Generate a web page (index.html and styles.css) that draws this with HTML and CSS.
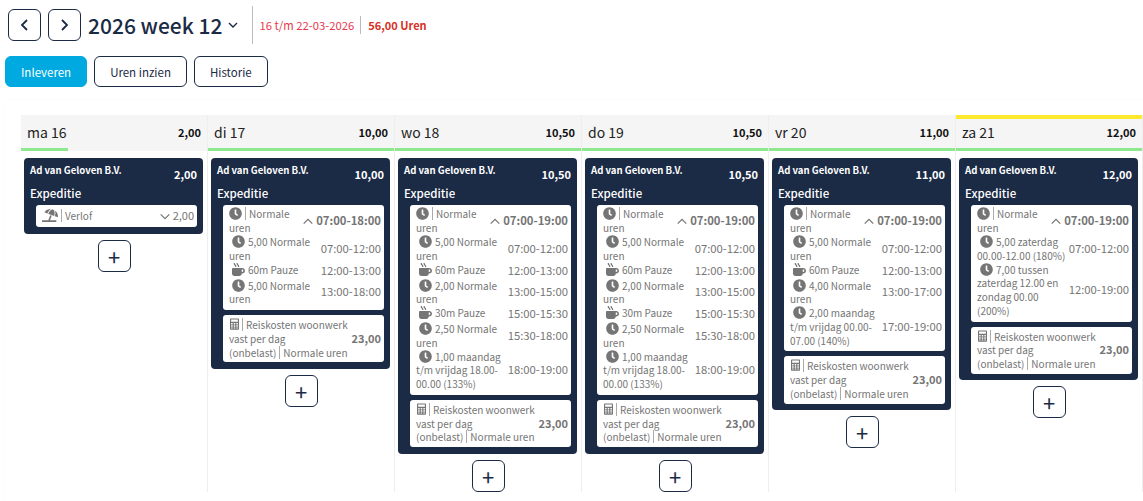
FILE: index.html
```html
<!DOCTYPE html>
<html lang="nl">
<head>
  <meta charset="UTF-8">
  <title>Uren</title>
  <link rel="stylesheet" href="styles.css">
</head>
<body>
  <svg class="defs" width="0" height="0">
    <symbol id="clock" viewBox="0 0 512 512"><path d="M256,8C119,8,8,119,8,256S119,504,256,504,504,393,504,256,393,8,256,8Zm92.49,313h0l-20,25a16,16,0,0,1-22.49,2.5h0l-67-49.72a40,40,0,0,1-15-31.23V112a16,16,0,0,1,16-16h32a16,16,0,0,1,16,16V256l58,42.5A16,16,0,0,1,348.49,321Z"/></symbol>
    <symbol id="mug" viewBox="0 0 512 512"><path d="M127.1 146.5c1.3 7.7 8 13.5 16 13.5h16.5c9.8 0 17.6-8.5 16.3-18-3.8-28.2-16.4-54.2-36.6-74.7-14.4-14.7-23.6-33.3-26.4-53.5C111.8 5.9 105 0 96.8 0H80.4C70.6 0 63 8.5 64.1 18c3.9 31.9 18 61.3 40.6 84.4 12 12.2 19.7 27.5 22.4 44.1zm112 0c1.3 7.7 8 13.5 16 13.5h16.5c9.8 0 17.6-8.5 16.3-18-3.8-28.2-16.4-54.2-36.6-74.7-14.4-14.7-23.6-33.3-26.4-53.5C223.8 5.9 217 0 208.8 0h-16.4c-9.8 0-17.5 8.5-16.3 18 3.9 31.9 18 61.3 40.6 84.4 12 12.2 19.7 27.5 22.4 44.1zM400 192H32c-17.7 0-32 14.3-32 32v192c0 53 43 96 96 96h192c53 0 96-43 96-96h16c61.8 0 112-50.2 112-112s-50.2-112-112-112zm0 160h-16v-96h16c26.5 0 48 21.5 48 48s-21.5 48-48 48z"/></symbol>
    <symbol id="calc" viewBox="0 0 12 15"><path fill-rule="evenodd" d="M1 0h10a1 1 0 0 1 1 1v13a1 1 0 0 1-1 1H1a1 1 0 0 1-1-1V1a1 1 0 0 1 1-1zm.5 1.5v3h9v-3zm0 4.500v2h2V6zm3.500 0v2h2V6zm3.500 0v2h2V6zM1.500 9v2h2V9zM5 9v2h2V9zm3.500 0v2h2V9zm-7 3v1.500h2V12zM5 12v1.500h2V12zm3.500 0v1.500h2V12z"/></symbol>
    <symbol id="beach" viewBox="0 0 640 512"><path d="M115.38 136.9l102.11 37.18c35.19-81.54 86.21-144.29 139-173.7-95.88-4.89-188.78 36.96-248.53 111.8-6.69 8.4-2.66 21.05 7.42 24.72zm132.25 48.16l238.48 86.83c35.76-121.38 18.7-231.66-42.63-253.98-7.4-2.7-15.13-4-23.09-4-58.02.01-128.27 69.17-172.76 171.15zM521.48 60.5c6.22 16.3 10.83 34.6 13.2 55.19 5.74 49.89-1.42 108.23-18.95 166.98l102.62 37.36c10.09 3.67 21.31-3.43 21.57-14.17 2.32-95.69-41.91-187.44-118.44-245.36zM560 447.98H321.06L386 269.5l-60.14-21.9-72.9 200.37H16c-8.84 0-16 7.16-16 16.01v32.01C0 504.83 7.16 512 16 512h544c8.84 0 16-7.17 16-16.01v-32.01c0-8.84-7.16-16-16-16z"/></symbol>
    <symbol id="up" viewBox="0 0 14 8"><path d="M1 7l6-6 6 6" fill="none" stroke="currentColor" stroke-width="1.700"/></symbol>
    <symbol id="down" viewBox="0 0 14 8"><path d="M1 1l6 6 6-6" fill="none" stroke="currentColor" stroke-width="1.700"/></symbol>
  </svg>

  <header class="topbar">
    <button class="nav-btn"><svg width="9" height="12" viewBox="0 0 9 12"><path d="M7 1L2 6l5 5" fill="none" stroke="currentColor" stroke-width="1.800"/></svg></button>
    <button class="nav-btn"><svg width="9" height="12" viewBox="0 0 9 12"><path d="M2 1l5 5-5 5" fill="none" stroke="currentColor" stroke-width="1.800"/></svg></button>
    <h1 class="week-title">2026 week 12</h1>
    <svg class="week-caret" width="10" height="6" viewBox="0 0 10 6"><path d="M1 1l4 4 4-4" fill="none" stroke="currentColor" stroke-width="1.400"/></svg>
    <div class="week-info">
      <span class="week-dates">16 t/m 22-03-2026</span>
      <span class="week-hours">56,00 Uren</span>
    </div>
  </header>

  <div class="actions">
    <button class="btn btn-primary">Inleveren</button>
    <button class="btn">Uren inzien</button>
    <button class="btn">Historie</button>
  </div>

  <main class="board">
    <!-- maandag -->
    <section class="day">
      <div class="day-head"><span class="day-name">ma 16</span><span class="day-total">2,00</span><div class="day-bar" style="width: 25%"></div></div>
      <div class="card">
        <div class="card-top"><span class="employer">Ad van Geloven B.V.</span><span class="card-total">2,00</span></div>
        <div class="dept">Expeditie</div>
        <div class="entry entry-flat">
          <span class="line-label"><svg class="ico ico-beach"><use href="#beach"/></svg><span class="bar"></span>Verlof</span>
          <span class="line-sum"><svg class="chev"><use href="#down"/></svg>2,00</span>
        </div>
      </div>
      <button class="add-btn">+</button>
    </section>

    <!-- dinsdag -->
    <section class="day">
      <div class="day-head"><span class="day-name">di 17</span><span class="day-total">10,00</span><div class="day-bar"></div></div>
      <div class="card">
        <div class="card-top"><span class="employer">Ad van Geloven B.V.</span><span class="card-total">10,00</span></div>
        <div class="dept">Expeditie</div>
        <div class="entry">
          <div class="row row-main"><span class="line-label"><svg class="ico"><use href="#clock"/></svg><span class="bar"></span>Normale uren</span><span class="time-main"><svg class="chev"><use href="#up"/></svg>07:00-18:00</span></div>
          <div class="row"><span class="line-label"><svg class="ico ico-sub"><use href="#clock"/></svg>5,00 Normale uren</span><span class="time">07:00-12:00</span></div>
          <div class="row row-pause"><span class="line-label"><svg class="ico ico-sub"><use href="#mug"/></svg>60m Pauze</span><span class="time">12:00-13:00</span></div>
          <div class="row"><span class="line-label"><svg class="ico ico-sub"><use href="#clock"/></svg>5,00 Normale uren</span><span class="time">13:00-18:00</span></div>
        </div>
        <div class="entry entry-cost">
          <span class="line-label"><svg class="ico ico-calc"><use href="#calc"/></svg><span class="bar"></span>Reiskosten woonwerk vast per dag <span class="nowrap">(onbelast)<span class="bar"></span>Normale uren</span></span>
          <span class="amount">23,00</span>
        </div>
      </div>
      <button class="add-btn">+</button>
    </section>

    <!-- woensdag -->
    <section class="day">
      <div class="day-head"><span class="day-name">wo 18</span><span class="day-total">10,50</span><div class="day-bar"></div></div>
      <div class="card">
        <div class="card-top"><span class="employer">Ad van Geloven B.V.</span><span class="card-total">10,50</span></div>
        <div class="dept">Expeditie</div>
        <div class="entry">
          <div class="row row-main"><span class="line-label"><svg class="ico"><use href="#clock"/></svg><span class="bar"></span>Normale uren</span><span class="time-main"><svg class="chev"><use href="#up"/></svg>07:00-19:00</span></div>
          <div class="row"><span class="line-label"><svg class="ico ico-sub"><use href="#clock"/></svg>5,00 Normale uren</span><span class="time">07:00-12:00</span></div>
          <div class="row row-pause"><span class="line-label"><svg class="ico ico-sub"><use href="#mug"/></svg>60m Pauze</span><span class="time">12:00-13:00</span></div>
          <div class="row"><span class="line-label"><svg class="ico ico-sub"><use href="#clock"/></svg>2,00 Normale uren</span><span class="time">13:00-15:00</span></div>
          <div class="row row-pause"><span class="line-label"><svg class="ico ico-sub"><use href="#mug"/></svg>30m Pauze</span><span class="time">15:00-15:30</span></div>
          <div class="row"><span class="line-label"><svg class="ico ico-sub"><use href="#clock"/></svg>2,50 Normale uren</span><span class="time">15:30-18:00</span></div>
          <div class="row"><span class="line-label"><svg class="ico ico-sub"><use href="#clock"/></svg>1,00 maandag t/m vrijdag 18.00-00.00 (133%)</span><span class="time">18:00-19:00</span></div>
        </div>
        <div class="entry entry-cost">
          <span class="line-label"><svg class="ico ico-calc"><use href="#calc"/></svg><span class="bar"></span>Reiskosten woonwerk vast per dag <span class="nowrap">(onbelast)<span class="bar"></span>Normale uren</span></span>
          <span class="amount">23,00</span>
        </div>
      </div>
      <button class="add-btn">+</button>
    </section>

    <!-- donderdag -->
    <section class="day">
      <div class="day-head"><span class="day-name">do 19</span><span class="day-total">10,50</span><div class="day-bar"></div></div>
      <div class="card">
        <div class="card-top"><span class="employer">Ad van Geloven B.V.</span><span class="card-total">10,50</span></div>
        <div class="dept">Expeditie</div>
        <div class="entry">
          <div class="row row-main"><span class="line-label"><svg class="ico"><use href="#clock"/></svg><span class="bar"></span>Normale uren</span><span class="time-main"><svg class="chev"><use href="#up"/></svg>07:00-19:00</span></div>
          <div class="row"><span class="line-label"><svg class="ico ico-sub"><use href="#clock"/></svg>5,00 Normale uren</span><span class="time">07:00-12:00</span></div>
          <div class="row row-pause"><span class="line-label"><svg class="ico ico-sub"><use href="#mug"/></svg>60m Pauze</span><span class="time">12:00-13:00</span></div>
          <div class="row"><span class="line-label"><svg class="ico ico-sub"><use href="#clock"/></svg>2,00 Normale uren</span><span class="time">13:00-15:00</span></div>
          <div class="row row-pause"><span class="line-label"><svg class="ico ico-sub"><use href="#mug"/></svg>30m Pauze</span><span class="time">15:00-15:30</span></div>
          <div class="row"><span class="line-label"><svg class="ico ico-sub"><use href="#clock"/></svg>2,50 Normale uren</span><span class="time">15:30-18:00</span></div>
          <div class="row"><span class="line-label"><svg class="ico ico-sub"><use href="#clock"/></svg>1,00 maandag t/m vrijdag 18.00-00.00 (133%)</span><span class="time">18:00-19:00</span></div>
        </div>
        <div class="entry entry-cost">
          <span class="line-label"><svg class="ico ico-calc"><use href="#calc"/></svg><span class="bar"></span>Reiskosten woonwerk vast per dag <span class="nowrap">(onbelast)<span class="bar"></span>Normale uren</span></span>
          <span class="amount">23,00</span>
        </div>
      </div>
      <button class="add-btn">+</button>
    </section>

    <!-- vrijdag -->
    <section class="day">
      <div class="day-head"><span class="day-name">vr 20</span><span class="day-total">11,00</span><div class="day-bar"></div></div>
      <div class="card">
        <div class="card-top"><span class="employer">Ad van Geloven B.V.</span><span class="card-total">11,00</span></div>
        <div class="dept">Expeditie</div>
        <div class="entry">
          <div class="row row-main"><span class="line-label"><svg class="ico"><use href="#clock"/></svg><span class="bar"></span>Normale uren</span><span class="time-main"><svg class="chev"><use href="#up"/></svg>07:00-19:00</span></div>
          <div class="row"><span class="line-label"><svg class="ico ico-sub"><use href="#clock"/></svg>5,00 Normale uren</span><span class="time">07:00-12:00</span></div>
          <div class="row row-pause"><span class="line-label"><svg class="ico ico-sub"><use href="#mug"/></svg>60m Pauze</span><span class="time">12:00-13:00</span></div>
          <div class="row"><span class="line-label"><svg class="ico ico-sub"><use href="#clock"/></svg>4,00 Normale uren</span><span class="time">13:00-17:00</span></div>
          <div class="row"><span class="line-label"><svg class="ico ico-sub"><use href="#clock"/></svg>2,00 maandag t/m vrijdag 00.00-07.00 (140%)</span><span class="time">17:00-19:00</span></div>
        </div>
        <div class="entry entry-cost">
          <span class="line-label"><svg class="ico ico-calc"><use href="#calc"/></svg><span class="bar"></span>Reiskosten woonwerk vast per dag <span class="nowrap">(onbelast)<span class="bar"></span>Normale uren</span></span>
          <span class="amount">23,00</span>
        </div>
      </div>
      <button class="add-btn">+</button>
    </section>

    <!-- zaterdag -->
    <section class="day day-today">
      <div class="day-head"><span class="day-name">za 21</span><span class="day-total">12,00</span><div class="day-bar"></div></div>
      <div class="card">
        <div class="card-top"><span class="employer">Ad van Geloven B.V.</span><span class="card-total">12,00</span></div>
        <div class="dept">Expeditie</div>
        <div class="entry">
          <div class="row row-main"><span class="line-label"><svg class="ico"><use href="#clock"/></svg><span class="bar"></span>Normale uren</span><span class="time-main"><svg class="chev"><use href="#up"/></svg>07:00-19:00</span></div>
          <div class="row"><span class="line-label"><svg class="ico ico-sub"><use href="#clock"/></svg>5,00 zaterdag 00.00-12.00 (180%)</span><span class="time">07:00-12:00</span></div>
          <div class="row"><span class="line-label"><svg class="ico ico-sub"><use href="#clock"/></svg>7,00 tussen zaterdag 12.00 en zondag 00.00 (200%)</span><span class="time">12:00-19:00</span></div>
        </div>
        <div class="entry entry-cost">
          <span class="line-label"><svg class="ico ico-calc"><use href="#calc"/></svg><span class="bar"></span>Reiskosten woonwerk vast per dag <span class="nowrap">(onbelast)<span class="bar"></span>Normale uren</span></span>
          <span class="amount">23,00</span>
        </div>
      </div>
      <button class="add-btn">+</button>
    </section>
  </main>
</body>
</html>
```

FILE: styles.css
```css
/* General */
html, body {
  height: 100%;
}

body {
  margin: 0;
  overflow: hidden;
  background: #fff;
  color: #1b2a45;
  font-family: "Noto Sans CJK SC", "Noto Sans", sans-serif;
  font-size: 11px;
}

button {
  font-family: inherit;
  cursor: pointer;
}

.defs {
  position: absolute;
}

/* Top bar */
.topbar {
  display: flex;
  align-items: center;
  height: 38px;
  padding: 6px 0 0 8px;
}

.nav-btn {
  display: flex;
  align-items: center;
  justify-content: center;
  width: 33px;
  height: 32px;
  margin-right: 7px;
  padding: 0;
  border: 1px solid #1b2a45;
  border-radius: 6px;
  background: #fff;
  color: #1b2a45;
}

.week-title {
  margin: 0;
  font-size: 21px;
  font-weight: 500;
  line-height: 32px;
}

.week-caret {
  margin: 0 0 0 6px;
}

.week-info {
  display: flex;
  align-items: center;
  height: 38px;
  margin-left: 14px;
  padding-left: 6px;
  border-left: 1px solid #bbb;
  font-size: 11.300px;
}

.week-dates {
  padding-right: 6px;
  border-right: 1px solid #bbb;
  color: #e8384f;
  line-height: 18px;
}

.week-hours {
  padding-left: 7px;
  color: #d9301f;
  font-size: 11px;
  font-weight: 700;
}

/* Action buttons */
.actions {
  display: flex;
  gap: 7px;
  padding: 12px 0 0 5px;
}

.btn {
  height: 31px;
  padding: 0 15px;
  border: 1px solid #1b2a45;
  border-radius: 6px;
  background: #fff;
  color: #1b2a45;
  font-size: 11.500px;
}

.btn-primary {
  border-color: #00a9e0;
  background: #00a9e0;
  color: #fff;
}

/* Week board */
.board {
  display: grid;
  grid-template-columns: repeat(6, 187px);
  height: 392px;
  margin: 13px 0 0 5px;
  padding: 15px 0 0 16px;
  box-shadow: 0 0 4px rgba(0, 0, 0, 0.03);
}

.day {
  display: flex;
  flex-direction: column;
  align-items: flex-start;
  height: 377px;
  border-right: 1px solid #eee;
}

.day-head {
  position: relative;
  display: flex;
  flex: none;
  align-items: center;
  justify-content: space-between;
  align-self: stretch;
  box-sizing: border-box;
  height: 36px;
  padding: 0 6px 2px;
  background: #f5f5f5;
}

.day-today .day-head::before {
  content: "";
  position: absolute;
  top: 0;
  left: 0;
  width: 100%;
  height: 4px;
  background: #ffe92e;
}

.day-name {
  color: #222;
  font-size: 14px;
}

.day-total {
  color: #111;
  font-size: 11px;
  font-weight: 700;
}

.day-bar {
  position: absolute;
  left: 0;
  bottom: 0;
  width: 100%;
  height: 3px;
  background: #8ee88e;
}

/* Employer card */
.card {
  flex: none;
  box-sizing: border-box;
  width: 179px;
  margin: 7px 0 0 3px;
  padding: 4px 6px 6.500px;
  border-radius: 4px;
  background: #1b2a45;
  color: #fff;
}

.card-top {
  display: flex;
  align-items: center;
  justify-content: space-between;
  height: 20px;
}

.employer {
  margin-bottom: 4px;
  font-size: 9.600px;
  font-weight: 700;
}

.card-total {
  margin-top: 3px;
  font-size: 11px;
  font-weight: 700;
}

.dept {
  height: 23px;
  font-size: 11.500px;
  font-weight: 500;
  line-height: 23px;
}

.entry {
  box-sizing: border-box;
  margin-left: 6px;
  padding: 2px 3px 4px 6px;
  border-radius: 3px;
  background: #fff;
  color: #757575;
  font-size: 10px;
  line-height: 13.750px;
}

.entry-flat {
  display: flex;
  align-items: center;
  justify-content: space-between;
  height: 22px;
  padding: 0 3px 0 6px;
}

.entry-cost {
  display: flex;
  align-items: center;
  justify-content: space-between;
  margin-top: 5px;
  padding: 3px 3px 3px 6px;
}

.row {
  display: flex;
  align-items: center;
  justify-content: space-between;
  gap: 3px;
}

.row-main {
  min-height: 28px;
}

.row-pause {
  min-height: 16px;
}

.row-pause .line-label {
  align-self: flex-start;
}

.line-label {
  flex: 1;
}

.time, .time-main, .amount, .line-sum {
  flex: none;
  white-space: nowrap;
}

.time {
  font-size: 11.300px;
}

.time-main {
  display: flex;
  align-items: center;
  font-size: 11.300px;
  font-weight: 700;
}

.amount {
  font-size: 11px;
  font-weight: 700;
}

.line-sum {
  display: flex;
  align-items: center;
  font-size: 11px;
}

.nowrap {
  white-space: nowrap;
}

/* Icons */
.ico {
  width: 13px;
  height: 13px;
  vertical-align: -2px;
  fill: #757575;
}

.ico-sub {
  margin: 0 3px;
}

.ico-calc {
  width: 9px;
  height: 12px;
  margin-left: 1px;
  vertical-align: -1px;
}

.ico-beach {
  width: 16px;
  height: 13px;
  vertical-align: -2px;
}

.chev {
  width: 10px;
  height: 7px;
  margin-right: 3px;
  color: #757575;
}

.bar {
  display: inline-block;
  width: 1px;
  height: 13px;
  margin: 0 3px;
  vertical-align: -2px;
  background: #aaa;
}

/* Add button */
.add-btn {
  flex: none;
  align-self: center;
  width: 33px;
  height: 32px;
  margin-top: 6px;
  padding: 0;
  border: 1px solid #1b2a45;
  border-radius: 6px;
  background: #fff;
  color: #1b2a45;
  font-size: 22px;
  line-height: 28px;
}
```
